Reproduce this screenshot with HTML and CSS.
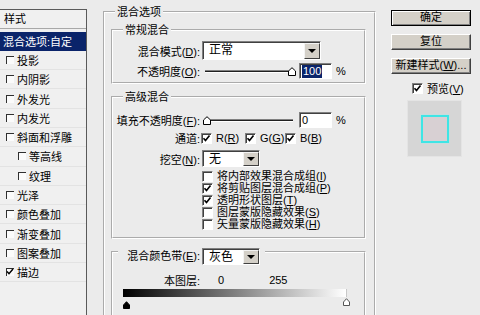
FILE: index.html
```html
<!DOCTYPE html>
<html lang="zh-CN">
<head>
    <meta charset="UTF-8">
    <meta name="viewport" content="width=device-width, initial-scale=1.0">
    <title>图层样式</title>
    <link rel="stylesheet" href="styles.css">
</head>
<body>
    <div class="dialog">
        <!-- style list -->
        <div class="styles-panel">
            <div class="panel-head">样式</div>
            <ul class="style-list">
                <li class="active">混合选项:自定</li>
                <li><span class="lbox"></span>投影</li>
                <li><span class="lbox"></span>内阴影</li>
                <li><span class="lbox"></span>外发光</li>
                <li><span class="lbox"></span>内发光</li>
                <li><span class="lbox"></span>斜面和浮雕</li>
                <li class="sub"><span class="lbox"></span>等高线</li>
                <li class="sub"><span class="lbox"></span>纹理</li>
                <li><span class="lbox"></span>光泽</li>
                <li><span class="lbox"></span>颜色叠加</li>
                <li><span class="lbox"></span>渐变叠加</li>
                <li><span class="lbox"></span>图案叠加</li>
                <li><span class="lbox"><svg viewBox="0 0 8 8" width="8" height="8"><path d="M1 3.5l2 2.2L7 1" fill="none" stroke="#000" stroke-width="1.5"/></svg></span>描边</li>
            </ul>
        </div>

        <!-- blending options -->
        <div class="main">
            <fieldset class="group outer">
                <legend>混合选项</legend>
                <div class="outer-body">
                    <fieldset class="group general">
                        <legend>常规混合</legend>
                        <div class="row row-mode">
                            <span class="lbl">混合模式(<u>D</u>):</span>
                            <div class="select wide"><span class="val">正常</span><span class="arrow"></span></div>
                        </div>
                        <div class="row row-opacity">
                            <span class="lbl">不透明度(<u>O</u>):</span>
                            <div class="slider">
                                <div class="track"></div>
                                <svg class="thumb thumb-max" viewBox="0 0 8 9" width="8" height="9"><path d="M0.5 8.5V4L4 0.7 7.5 4v4.5z" fill="#fff" stroke="#000"/></svg>
                            </div>
                            <span class="num"><span class="hl">100</span></span>
                            <span class="pct">%</span>
                        </div>
                    </fieldset>

                    <fieldset class="group advanced">
                        <legend>高级混合</legend>
                        <div class="row row-fill">
                            <span class="lbl">填充不透明度(<u>F</u>):</span>
                            <div class="slider">
                                <div class="track"></div>
                                <svg class="thumb thumb-min" viewBox="0 0 8 9" width="8" height="9"><path d="M0.5 8.5V4L4 0.7 7.5 4v4.5z" fill="#fff" stroke="#000"/></svg>
                            </div>
                            <span class="num">0</span>
                            <span class="pct">%</span>
                        </div>
                        <div class="row row-channels">
                            <span class="lbl">通道:</span>
                            <span class="chan ch-r"><span class="chk"><svg viewBox="0 0 9 9" width="9" height="9"><path d="M1.5 4.2l2 2.3 4-5" fill="none" stroke="#000" stroke-width="1.6"/></svg></span><span>R(<u>R</u>)</span></span>
                            <span class="chan ch-g"><span class="chk"><svg viewBox="0 0 9 9" width="9" height="9"><path d="M1.5 4.2l2 2.3 4-5" fill="none" stroke="#000" stroke-width="1.6"/></svg></span><span>G(<u>G</u>)</span></span>
                            <span class="chan"><span class="chk"><svg viewBox="0 0 9 9" width="9" height="9"><path d="M1.5 4.2l2 2.3 4-5" fill="none" stroke="#000" stroke-width="1.6"/></svg></span><span>B(<u>B</u>)</span></span>
                        </div>
                        <div class="row row-knockout">
                            <span class="lbl">挖空(<u>N</u>):</span>
                            <div class="select narrow"><span class="val">无</span><span class="arrow"></span></div>
                        </div>
                        <ul class="checks">
                            <li><span class="chk"></span><span>将内部效果混合成组(<u>I</u>)</span></li>
                            <li><span class="chk"><svg viewBox="0 0 9 9" width="9" height="9"><path d="M1.5 4.2l2 2.3 4-5" fill="none" stroke="#000" stroke-width="1.6"/></svg></span><span>将剪贴图层混合成组(<u>P</u>)</span></li>
                            <li><span class="chk"><svg viewBox="0 0 9 9" width="9" height="9"><path d="M1.5 4.2l2 2.3 4-5" fill="none" stroke="#000" stroke-width="1.6"/></svg></span><span>透明形状图层(<u>T</u>)</span></li>
                            <li><span class="chk"></span><span>图层蒙版隐藏效果(<u>S</u>)</span></li>
                            <li><span class="chk"></span><span>矢量蒙版隐藏效果(<u>H</u>)</span></li>
                        </ul>
                    </fieldset>

                    <fieldset class="group blend-if">
                        <legend>
                            <span class="lbl">混合颜色带(<u>E</u>):</span>
                            <div class="select narrow"><span class="val">灰色</span><span class="arrow"></span></div>
                        </legend>
                        <div class="row row-layer">
                            <span class="lbl">本图层:</span>
                            <span class="lo">0</span>
                            <span class="hi">255</span>
                        </div>
                        <div class="ramp"></div>
                        <div class="ramp-thumbs">
                            <svg class="rthumb rthumb-black" viewBox="0 0 7 8" width="7" height="8"><path d="M0.5 7.5V4L3.5 0.7 6.5 4v3.5z" fill="#000" stroke="#000"/></svg>
                            <svg class="rthumb rthumb-white" viewBox="0 0 7 8" width="7" height="8"><path d="M0.5 7.5V4L3.5 0.7 6.5 4v3.5z" fill="#fff" stroke="#555"/></svg>
                        </div>
                    </fieldset>
                </div>
            </fieldset>
        </div>

        <!-- buttons -->
        <div class="side">
            <div class="btn default">确定</div>
            <div class="btn">复位</div>
            <div class="btn">新建样式(<u>W</u>)...</div>
            <div class="preview-check"><span class="chk"><svg viewBox="0 0 9 9" width="9" height="9"><path d="M1.5 4.2l2 2.3 4-5" fill="none" stroke="#000" stroke-width="1.6"/></svg></span><span>预览(<u>V</u>)</span></div>
            <div class="preview">
                <div class="preview-square"></div>
            </div>
        </div>
    </div>
</body>
</html>
```

FILE: styles.css
```css
* {
    box-sizing: border-box;
}

body {
    margin: 0;
    width: 480px;
    height: 315px;
    overflow: hidden;
    background-color: #ebebeb;
    font-family: "Liberation Sans", "Noto Sans CJK SC", sans-serif;
    font-size: 11px;
    color: #000;
}

u {
    text-decoration: underline;
}

.dialog {
    display: flex;
    align-items: flex-start;
}

/* Left style list */
.styles-panel {
    width: 87px;
    height: 310px;
    margin-top: 9px;
    background-color: #f0f0f0;
    border-top: 1px solid #5a5a5a;
    border-right: 1px solid #5a5a5a;
    flex: none;
}

.panel-head {
    height: 19px;
    line-height: 18px;
    padding-left: 4px;
    border-bottom: 1px solid #a8a8a8;
}

.style-list {
    list-style: none;
    margin: 2.5px 0 0;
    padding: 0;
}

.style-list li {
    height: 19.3px;
    display: flex;
    align-items: center;
    padding-left: 6px;
    border-bottom: 1px solid #e3e3e3;
    white-space: nowrap;
}

.style-list li.active {
    background-color: #0a246a;
    color: #fff;
    padding-left: 3px;
    border-bottom-color: #0a246a;
}

.style-list li.sub {
    padding-left: 18px;
}

.lbox {
    width: 8px;
    height: 8px;
    margin-right: 3px;
    background-color: #fbfbfb;
    border-top: 1px solid #303030;
    border-left: 1px solid #303030;
    display: flex;
    flex: none;
}

.lbox svg {
    margin: -1px 0 0 -1px;
}

/* Group boxes */
.main {
    width: 273px;
    margin-left: 16px;
    margin-top: 5px;
    flex: none;
}

fieldset.group {
    margin: 0;
    padding: 0;
    min-width: 0;
    border: 2px groove #ffffff;
}

.group legend {
    margin-left: 10px;
    padding: 0 2px;
    line-height: 14px;
}

.outer {
    height: 330px;
}

.outer-body {
    padding: 4px 8px 0 6px;
}

.general {
    padding-bottom: 3px !important;
}

.advanced {
    margin-top: 6px !important;
    padding-bottom: 7px !important;
}

.blend-if {
    height: 90px;
}

.blend-if legend {
    display: flex;
    align-items: center;
    margin-left: 5px;
    padding: 9px 5px 0 0;
    line-height: 17px;
}

.blend-if legend .lbl {
    width: 82px;
}

.row {
    display: flex;
    align-items: center;
}

.lbl {
    width: 87px;
    text-align: right;
    white-space: nowrap;
    flex: none;
}

.row-mode {
    margin-top: 4px;
    height: 19px;
}

.row-opacity {
    margin-top: 3px;
    height: 16px;
}

.row-fill {
    margin-top: 8px;
    height: 16px;
}

.row-channels {
    margin-top: 3px;
    height: 14px;
}

.row-knockout {
    margin-top: 5px;
    height: 17px;
}

/* Dropdowns */
.select {
    display: flex;
    margin-left: 2px;
    background-color: #fff;
    border: 1px solid;
    border-color: #808080 #fff #fff #808080;
    box-shadow: inset 1px 1px 0 #404040;
    padding: 1px 0 0 1px;
    flex: none;
}

.select.wide {
    width: 119px;
    height: 19px;
}

.select.narrow {
    width: 58px;
    height: 17px;
}

.select .val {
    flex: 1;
    padding-left: 5px;
    line-height: 14px;
    font-size: 12px;
}

.select .arrow {
    width: 16px;
    background-color: #d4d0c8;
    border: 1px solid;
    border-color: #f4f4f4 #404040 #404040 #f4f4f4;
    display: flex;
    align-items: center;
    justify-content: center;
}

.select .arrow::after {
    content: "";
    width: 0;
    height: 0;
    border-left: 4px solid transparent;
    border-right: 4px solid transparent;
    border-top: 4px solid #000;
}

/* Sliders */
.slider {
    position: relative;
    width: 97px;
    height: 16px;
    margin-left: 2px;
    padding-top: 7px;
    flex: none;
}

.track {
    height: 3px;
    margin: 0 6px 0 3px;
    background-color: #202020;
    border-top: 1px solid #808080;
    border-bottom: 1px solid #fff;
}

.thumb {
    position: absolute;
    top: 4px;
}

.thumb-max {
    left: 86px;
}

.thumb-min {
    left: 1px;
}

.num {
    width: 33px;
    height: 16px;
    background-color: #fff;
    border: 1px solid;
    border-color: #808080 #fff #fff #808080;
    box-shadow: inset 1px 1px 0 #404040;
    padding: 1px 0 0 2px;
    line-height: 13px;
    flex: none;
}

.num .hl {
    display: inline-block;
    background-color: #0a246a;
    color: #fff;
    padding: 0 1px;
}

.pct {
    margin-left: 4px;
}

/* Checkboxes */
.chk {
    width: 11px;
    height: 11px;
    background-color: #fff;
    border: 1px solid;
    border-color: #808080 #fff #fff #808080;
    box-shadow: inset 1px 1px 0 #404040;
    display: flex;
    align-items: center;
    justify-content: center;
    flex: none;
}

.chan {
    display: flex;
    align-items: center;
    white-space: nowrap;
    gap: 4px;
    flex: none;
}

.ch-r {
    width: 44px;
    margin-left: 1px;
}

.ch-g {
    width: 40px;
}

.checks {
    list-style: none;
    margin: 3px 0 0 89px;
    padding: 0;
}

.checks li {
    height: 12px;
    line-height: 12px;
    display: flex;
    align-items: center;
    gap: 4px;
    white-space: nowrap;
}

/* Blend if */
.row-layer {
    margin-top: 8px;
    height: 14px;
}

.lo {
    margin-left: 18px;
}

.hi {
    margin-left: 45px;
}

.ramp {
    width: 224px;
    height: 8px;
    margin: 2px 0 0 10px;
    background: linear-gradient(to right, #000, #fff);
    border-right: 1px solid #c8c8c8;
}

.ramp-thumbs {
    position: relative;
    height: 12px;
    margin-left: 10px;
}

.rthumb {
    position: absolute;
}

.rthumb-black {
    left: 0;
    top: 4px;
}

.rthumb-white {
    left: 220px;
    top: 1px;
}

/* Right column */
.side {
    width: 80px;
    margin-left: 15px;
    padding-top: 10px;
    display: flex;
    flex-direction: column;
    flex: none;
}

.btn {
    height: 16px;
    margin-bottom: 8px;
    background-color: #d4d0c8;
    border: 1px solid;
    border-color: #fff #404040 #404040 #fff;
    box-shadow: inset -1px -1px 0 #808080;
    text-align: center;
    line-height: 13px;
    white-space: nowrap;
}

.btn.default {
    border-color: #000;
    box-shadow: inset 1px 1px 0 #fff, inset -1px -1px 0 #808080;
}

.preview-check {
    height: 12px;
    display: flex;
    align-items: center;
    gap: 4px;
    padding-left: 21px;
    white-space: nowrap;
}

.preview {
    width: 55px;
    height: 57px;
    margin: 6px 0 0 16px;
    background-color: #d6d6d6;
    border: 1px solid #e4e4e4;
    display: flex;
    align-items: center;
    justify-content: center;
}

.preview-square {
    width: 28px;
    height: 28px;
    border: 2px solid #3fe5e5;
    background-color: #d8d0d3;
    box-shadow: 0 0 1px #7ff;
}
```
